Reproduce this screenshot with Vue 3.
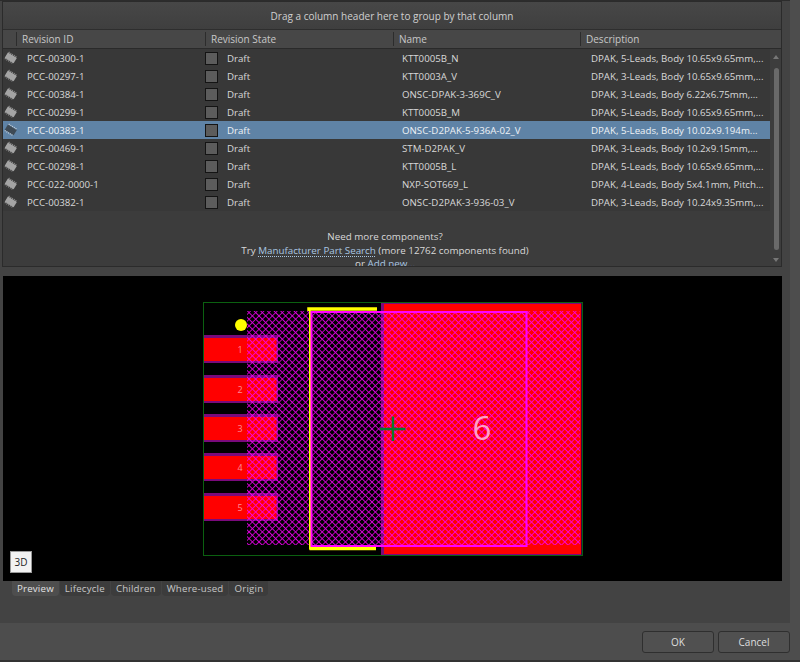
<script setup>
const rows = [
  ['PCC-00300-1', 'KTT0005B_N', 'DPAK, 5-Leads, Body 10.65x9.65mm,...'],
  ['PCC-00297-1', 'KTT0003A_V', 'DPAK, 3-Leads, Body 10.65x9.65mm,...'],
  ['PCC-00384-1', 'ONSC-DPAK-3-369C_V', 'DPAK, 3-Leads, Body 6.22x6.75mm,...'],
  ['PCC-00299-1', 'KTT0005B_M', 'DPAK, 5-Leads, Body 10.65x9.65mm,...'],
  ['PCC-00383-1', 'ONSC-D2PAK-5-936A-02_V', 'DPAK, 5-Leads, Body 10.02x9.194m...'],
  ['PCC-00469-1', 'STM-D2PAK_V', 'DPAK, 3-Leads, Body 10.2x9.15mm,...'],
  ['PCC-00298-1', 'KTT0005B_L', 'DPAK, 5-Leads, Body 10.65x9.65mm,...'],
  ['PCC-022-0000-1', 'NXP-SOT669_L', 'DPAK, 4-Leads, Body 5x4.1mm, Pitch...'],
  ['PCC-00382-1', 'ONSC-D2PAK-3-936-03_V', 'DPAK, 3-Leads, Body 10.24x9.35mm,...'],
]
const selected = 4
const columns = ['Revision ID', 'Revision State', 'Name', 'Description']
const tabs = ['Preview', 'Lifecycle', 'Children', 'Where-used', 'Origin']
const pads = [
  { n: 1, y: 335 },
  { n: 2, y: 375 },
  { n: 3, y: 414 },
  { n: 4, y: 453 },
  { n: 5, y: 493 },
]
</script>

<template>
  <div class="dialog">
    <div class="content">
      <section class="grid">
        <div class="group-bar">Drag a column header here to group by that column</div>
        <div class="head">
          <span class="head-icon"></span>
          <span v-for="c in columns" :key="c" class="head-cell">{{ c }}</span>
        </div>
        <div class="body">
          <div class="table">
            <div v-for="(r, i) in rows" :key="r[0]" class="row" :class="{ sel: i === selected }">
              <span class="icon-cell">
                <svg width="16" height="14" viewBox="0 0 16 14">
                  <g transform="rotate(32 8 7)">
                    <path d="M3.5 2.6v8.8M5.5 2.6v8.8M7.5 2.6v8.8M9.5 2.6v8.8M11.5 2.6v8.8" class="pins" />
                    <rect x="2.5" y="4" width="10.5" height="6" class="chip" />
                  </g>
                </svg>
              </span>
              <span class="cell id">{{ r[0] }}</span>
              <span class="cell state"><i class="check"></i>Draft</span>
              <span class="cell name">{{ r[1] }}</span>
              <span class="cell desc">{{ r[2] }}</span>
            </div>
            <div class="more">
              <div>Need more components?</div>
              <div>Try <a class="link dotted">Manufacturer Part Search</a> (more 12762 components found)</div>
              <div>or <a class="link">Add new...</a></div>
            </div>
          </div>
          <div class="scroll">
            <svg width="12" height="8" viewBox="0 0 12 8"><path d="M3 6h6L6 2z" class="arrow" /></svg>
            <div class="thumb"></div>
            <svg width="12" height="8" viewBox="0 0 12 8"><path d="M3 2h6L6 6z" class="arrow" /></svg>
          </div>
        </div>
      </section>

      <section class="preview">
        <svg class="canvas" width="779" height="305" viewBox="3 276 779 305">
          <defs>
            <pattern id="hatch" width="4.7" height="4.7" patternUnits="userSpaceOnUse" patternTransform="rotate(45 247 311)">
              <path d="M0 0H4.7M0 0V4.7" stroke="#ff00ff" stroke-width="1.7" fill="none" />
            </pattern>
          </defs>
          <rect x="203.500" y="302.500" width="379" height="253" fill="none" stroke="#0b6010" />
          <rect x="381" y="303" width="200.500" height="252" fill="#7a0a7c" />
          <rect x="384" y="304" width="197" height="250" fill="#ff0000" />
          <g v-for="p in pads" :key="p.n">
            <rect x="204" :y="p.y" width="74" height="28" fill="#7a0a7c" />
            <rect x="204" :y="p.y + 3" width="72.500" height="23" fill="#ff0000" />
          </g>
          <rect x="247" y="311" width="333" height="234" fill="url(#hatch)" opacity="0.85" />
          <path d="M309 311V309H377" fill="none" stroke="#ffff00" stroke-width="3.500" />
          <path d="M310 311V548.500H376" fill="none" stroke="#ffff00" stroke-width="2" />
          <path d="M309.500 548.500H376" fill="none" stroke="#ffff00" stroke-width="3.500" />
          <rect x="311.500" y="312" width="215" height="234" fill="none" stroke="#ff00ff" stroke-width="2" />
          <circle cx="241" cy="325" r="6" fill="#ffff00" />
          <text v-for="p in pads" :key="'t' + p.n" x="240" :y="p.y + 18" class="pad-num">{{ p.n }}</text>
          <text x="482" y="440" class="pad-big">6</text>
          <path d="M380 429H405.500M393 416.500V441" stroke="#0a7a2e" stroke-width="2.400" fill="none" />
        </svg>
        <button class="three-d">3D</button>
      </section>

      <nav class="tabs">
        <span v-for="(t, i) in tabs" :key="t" class="tab" :class="{ active: i === 0 }">{{ t }}</span>
      </nav>
    </div>

    <footer class="footer">
      <button class="btn ok">OK</button>
      <button class="btn cancel">Cancel</button>
    </footer>
  </div>
</template>

<style scoped>
.dialog {
  width: 800px;
  height: 662px;
  background: #4d4d4d;
  display: flex;
  flex-direction: column;
  overflow: hidden;
  font-family: "Open Sans", sans-serif;
  font-size: 9.7px;
  color: #d8d8d8;
  box-sizing: border-box;
  border-bottom: 2px solid #333;
}
.content {
  width: 790px;
  height: 623px;
  flex: none;
  box-sizing: border-box;
  background: #434343;
  padding: 0 8px 0 2px;
  border-top: 1px solid #2c2c2c;
}
.grid {
  height: 266px;
  box-sizing: border-box;
  background: #3d3d3d;
  border: 1px solid #2b2b2b;
  overflow: hidden;
}
.group-bar {
  height: 28px;
  line-height: 28px;
  text-align: center;
  font-size: 10px;
  background: linear-gradient(#474747, #3f3f3f);
  border-bottom: 1px solid #2e2e2e;
  box-sizing: border-box;
  color: #d0d0d0;
}
.head {
  height: 19px;
  box-sizing: border-box;
  display: grid;
  grid-template-columns: 13px 189px 188px 187px 189px 1fr;
  background: #474747;
  border-bottom: 1px solid #2a2a2a;
  color: #c8c8c8;
  font-size: 10px;
  line-height: 18px;
}
.head-cell {
  border-left: 1px solid #2c2c2c;
  padding-left: 5px;
  margin: 2px 0;
  line-height: 14px;
}
.body {
  display: flex;
  height: 218px;
  overflow: hidden;
}
.table {
  width: 767px;
  flex: none;
  background: #3c3c3c;
}
.row {
  height: 18px;
  display: grid;
  grid-template-columns: 13px 189px 188px 187px 190px;
  align-items: center;
  background: #383838;
}
.row.sel {
  background: #5f83a6;
  color: #eef2f6;
}
.icon-cell {
  display: flex;
  align-items: center;
  width: 13px;
  overflow: visible;
}
.icon-cell svg {
  flex: none;
}
.chip {
  fill: #a4a4a4;
}
.pins {
  stroke: #8d8d8d;
  stroke-width: 1;
  fill: none;
}
.row.sel .chip {
  fill: #3e4a55;
}
.row.sel .pins {
  stroke: #c8d2dc;
}
.cell {
  white-space: nowrap;
  overflow: hidden;
}
.id {
  padding-left: 11px;
}
.state {
  display: flex;
  align-items: center;
  gap: 9px;
}
.check {
  width: 11px;
  height: 11px;
  display: block;
  background: #5c5c5c;
  border: 1px solid #141414;
}
.name {
  padding-left: 9px;
}
.desc {
  padding-left: 11px;
}
.more {
  padding-top: 19px;
  height: 60px;
  box-sizing: border-box;
  text-align: center;
  font-size: 9.8px;
  line-height: 13.5px;
  padding-right: 3px;
  white-space: nowrap;
}
.link {
  color: #a9c6e2;
}
.dotted {
  text-decoration: underline dotted #a9c6e2;
  text-underline-offset: 2px;
}
.scroll {
  flex: 1;
  background: #3d3d3d;
  display: flex;
  flex-direction: column;
  align-items: center;
  justify-content: space-between;
  padding: 4px 0 3px;
  box-sizing: border-box;
}
.arrow {
  fill: #777;
}
.thumb {
  width: 5px;
  height: 182px;
  background: #6a6a6a;
  border-radius: 3px;
}
.preview {
  position: relative;
  margin: 9px 0 0 1px;
  width: 779px;
  height: 305px;
  background: #000;
}
.canvas {
  display: block;
}
.pad-num {
  font-family: "Open Sans", sans-serif;
  font-size: 9px;
  fill: #ff8a95;
  text-anchor: middle;
}
.pad-big {
  font-family: "Open Sans", sans-serif;
  font-size: 33px;
  fill: #ffa0c8;
  text-anchor: middle;
}
.three-d {
  position: absolute;
  left: 7px;
  bottom: 8px;
  width: 22px;
  height: 22px;
  padding: 0;
  background: #f2f2f2;
  border: 1px solid #9a9a9a;
  font-family: "Open Sans", sans-serif;
  font-size: 10px;
  color: #222;
}
.tabs {
  display: flex;
  margin-left: 10px;
  gap: 1px;
}
.tab {
  height: 15px;
  line-height: 15px;
  padding: 0 5px;
  background: #3c3c3c;
  border-radius: 0 0 4px 4px;
  color: #c6c6c6;
  letter-spacing: 0.2px;
}
.tab.active {
  background: #4e4e4e;
  color: #e2e2e2;
}
.footer {
  flex: 1;
  display: flex;
  justify-content: flex-end;
  gap: 4px;
  padding: 8px 10px 0 0;
}
.btn {
  width: 72px;
  height: 22px;
  padding: 0;
  background: #505050;
  border: 1px solid #2f2f2f;
  border-radius: 3px;
  color: #dedede;
  font-family: "Open Sans", sans-serif;
  font-size: 10px;
}
</style>
